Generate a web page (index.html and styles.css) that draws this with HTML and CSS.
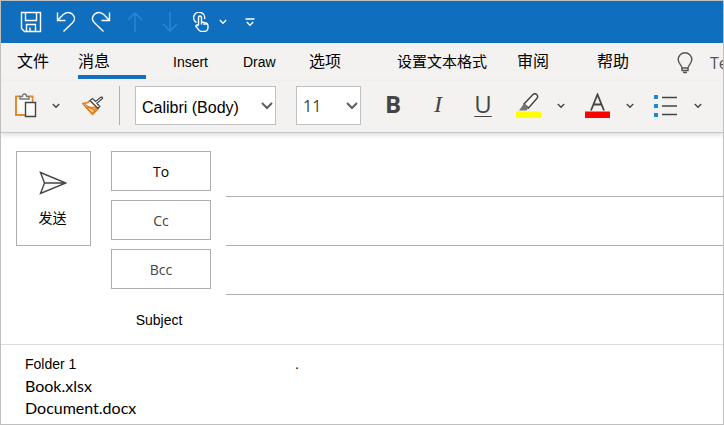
FILE: index.html
```
<!DOCTYPE html>
<html lang="zh-CN">
<head>
<meta charset="utf-8">
<meta name="viewport" content="width=device-width, initial-scale=1">
<title>消息</title>
<link rel="stylesheet" href="styles.css">
</head>
<body>
<div class="window">
  <header class="quick">
    <button class="icon-btn save" aria-label="Save"><svg width="22" height="22" viewBox="0 0 22 22"><path d="M1.5 1.5h19v19H4.5l-3-3zM5.5 1.5v8h11v-8M6.5 20.5v-7h9v7M10 20v-3.500"/></svg></button>
    <button class="icon-btn undo" aria-label="Undo"><svg width="20" height="22" viewBox="0 0 20 22"><path d="M1.500 1.500v8h8M2 9L7 3.800C10 .8 14 .8 16.500 3.200c2.600 2.600 2.600 6 0 8.600L7.500 20.500"/></svg></button>
    <button class="icon-btn redo" aria-label="Redo"><svg width="20" height="22" viewBox="0 0 20 22"><path d="M18.500 1.500v8h-8M18 9l-5-5.200C10 .8 6 .8 3.500 3.200c-2.600 2.600-2.600 6 0 8.600l9 8.700"/></svg></button>
    <button class="icon-btn dim up" aria-label="Previous" disabled><svg width="16" height="20" viewBox="0 0 16 20"><path d="M8 20V1M1 8l7-7 7 7"/></svg></button>
    <button class="icon-btn dim down" aria-label="Next" disabled><svg width="16" height="20" viewBox="0 0 16 20"><path d="M8 0v19M1 12l7 7 7-7"/></svg></button>
    <button class="icon-btn touch" aria-label="Touch mode"><svg width="16" height="20" viewBox="0 0 16 20"><path d="M3.500 10.500A5.500 5.500 0 1 1 11.500 7"/><path d="M5.500 13V5.500a1.500 1.500 0 0 1 3 0V10l4.500 1c1.500.4 2 1 2 2.500v2c0 2-1.500 4-3.500 4H8c-1.500 0-2.500-1.500-5-5-.8-1.300.8-2.200 2.500-.5M8.500 10v2.500M11 10.500v2.500M13 11v2"/></svg></button>
    <button class="icon-btn touch-menu" aria-label="Touch options"><svg width="8" height="6" viewBox="0 0 8 6"><path d="M.8 1L4 4.200 7.200 1"/></svg></button>
    <button class="icon-btn" aria-label="Customize toolbar"><svg width="10" height="9" viewBox="0 0 10 9"><path d="M.5 1h9M1.800 4L5 7.200 8.200 4"/></svg></button>
  </header>

  <nav class="tabs">
    <a href="#">文件</a>
    <a href="#" class="active">消息</a>
    <a href="#" class="latin">Insert</a>
    <a href="#" class="latin">Draw</a>
    <a href="#">选项</a>
    <a href="#" class="long">设置文本格式</a>
    <a href="#">审阅</a>
    <a href="#">帮助</a>
    <a href="#" class="tell"><svg width="16" height="22" viewBox="0 0 16 22"><path d="M5 16c0-3-3.800-4.200-3.800-8.500a6.800 6.800 0 0 1 13.600 0C14.800 11.800 11 13 11 16z"/><path d="M5 16v2.500h6V16M6 20.500h4" /></svg><span>Te</span></a>
  </nav>

  <div class="tools">
    <button class="icon-btn paste" aria-label="Paste"><svg width="23" height="25" viewBox="0 0 23 25"><path d="M6.500 3.500H2v18.500h9M14.500 3.500h4V9" fill="#fafafa" stroke="#e38b2c" stroke-width="2"/><path d="M3 4.500h14.500V10H11v11H3z" fill="#fafafa" stroke="none"/><path d="M6 6V3.500h2.500C8.500 1.600 9.500 1 10.500 1s2 .6 2 2.500H15V6z" fill="#fff" stroke="#777"/><path d="M11.500 9.500h10v14h-10z" fill="#fafafa" stroke="#444"/></svg></button>
    <button class="icon-btn drop" aria-label="Paste options"><svg width="8" height="6" viewBox="0 0 8 6"><path d="M.8 1L4 4.200 7.200 1"/></svg></button>
    <button class="icon-btn brush" aria-label="Format painter"><svg width="22" height="20" viewBox="0 0 22 20"><path d="M8 4.500C6 7 3.500 7.500.8 7.500L10.500 18.500l5.500-5.500z" fill="#fff" stroke="#e07b1d"/><path d="M4.500 11.500h10.800L10.500 18z" fill="#ffd27a" stroke="#e07b1d"/><path d="M3 8.500l10 6" stroke="#e07b1d"/><path d="M8 4.500l8 8 1.800-2-3-3.300 5.700-4.700q.3-1.700-1.400-1.500l-5.600 4.500-3-3z" fill="#fafafa" stroke="#444" stroke-width="1.200"/></svg></button>
    <span class="divider"></span>
    <label class="pick font"><select aria-label="Font"><option>Calibri (Body)</option></select><svg width="12" height="8" viewBox="0 0 12 8"><path d="M1 1l5 5 5-5"/></svg></label>
    <label class="pick size"><select aria-label="Font size"><option>11</option></select><svg width="12" height="8" viewBox="0 0 12 8"><path d="M1 1l5 5 5-5"/></svg></label>
    <button class="icon-btn letter bold">B</button>
    <button class="icon-btn letter italic">I</button>
    <button class="icon-btn letter underline">U</button>
    <button class="icon-btn color" aria-label="Highlight"><svg width="25" height="26" viewBox="0 0 25 26"><path d="M8 11L17 1.500c2.500-2 6 .8 4 3.700L12.500 15z" fill="#fafafa" stroke-width="1.500"/><path d="M8 10.500l4.500 4.500-2 2.500H3z" fill="#777" stroke="none"/><path d="M0 18.500h25v6.500H0z" fill="#ff0" stroke="none"/></svg></button>
    <button class="icon-btn drop" aria-label="Highlight options"><svg width="8" height="6" viewBox="0 0 8 6"><path d="M.8 1L4 4.200 7.200 1"/></svg></button>
    <button class="icon-btn color" aria-label="Font color"><svg width="25" height="26" viewBox="0 0 25 26"><path d="M6 17.500L12.500 1.500 19 17.500M8.500 11.500h8" stroke-width="1.800"/><path d="M0 18.500h25v6.500H0z" fill="#f00" stroke="none"/></svg></button>
    <button class="icon-btn drop" aria-label="Font color options"><svg width="8" height="6" viewBox="0 0 8 6"><path d="M.8 1L4 4.200 7.200 1"/></svg></button>
    <button class="icon-btn list" aria-label="Bullets"><svg width="24" height="22" viewBox="0 0 24 22"><path d="M0 0h4v4H0zM0 9h4v4H0zM0 18h4v4H0z" fill="#1e88d2" stroke="none"/><path d="M8 2.500h15M8 11h15M8 19.500h15"/></svg></button>
    <button class="icon-btn" aria-label="Bullet options"><svg width="8" height="6" viewBox="0 0 8 6"><path d="M.8 1L4 4.200 7.200 1"/></svg></button>
  </div>

  <form class="compose">
    <button type="button" class="box send"><svg width="28" height="24" viewBox="0 0 28 24"><path d="M1.500 1.500L27 12 1.500 22.500l4-10.500zM5.500 12H27" fill="#fafafa"/></svg><span>发送</span></button>
    <div class="fields">
      <div class="row"><button type="button" class="box to">To</button><input aria-label="To"></div>
      <div class="row"><button type="button" class="box">Cc</button><input aria-label="Cc"></div>
      <div class="row"><button type="button" class="box">Bcc</button><input aria-label="Bcc"></div>
      <div class="row subject"><label for="subject">Subject</label><input id="subject"></div>
    </div>
  </form>

  <main class="body">
    <p class="folder"><span>Folder 1</span><span>.</span></p>
    <p>Book.xlsx</p>
    <p>Document.docx</p>
  </main>
</div>
</body>
</html>
```
FILE: styles.css
```
* { box-sizing: border-box; }

body {
  margin: 0;
  font-family: "Liberation Sans", "Noto Sans CJK SC", sans-serif;
  font-size: 14px;
  color: #000;
  background: #fff;
}

button, input, select { font: inherit; color: inherit; margin: 0; }

svg {
  display: block;
  flex: none;
  fill: none;
  stroke: currentColor;
  stroke-width: 1.4;
}

.window {
  display: flex;
  flex-direction: column;
  min-height: 100vh;
  border: 1px solid #bfbfbf;
  overflow: hidden;
}

.icon-btn {
  flex: none;
  padding: 0;
  border: 0;
  background: none;
}

/* Quick access bar */
.quick {
  display: flex;
  align-items: center;
  height: 42px;
  padding-left: 19px;
  background: #106ebe;
  color: #fff;
}
.save { margin-right: 14px; }
.undo { margin-right: 15px; }
.redo { margin-right: 16px; }
.up { margin-right: 19px; }
.down { margin-right: 15px; }
.touch { margin-right: 10px; }
.touch-menu { margin-right: 18px; }
.quick .dim { color: #2b88d8; }

/* Ribbon tabs */
.tabs {
  display: grid;
  grid-template-columns: 61px 95px 70px 66px 88px 120px 80px 80px 1fr;
  height: 38px;
  padding-left: 16px;
  background: #f3f2f1;
  overflow: hidden;
}
.tabs a {
  justify-self: start;
  height: 36px;
  line-height: 38px;
  font-size: 16px;
  color: #000;
  text-decoration: none;
  white-space: nowrap;
}
.tabs .active { width: 68px; border-bottom: 4px solid #106ebe; }
.tabs .latin { font-size: 14px; }
.tabs .long { font-size: 15px; }
.tabs .tell {
  display: flex;
  align-items: center;
  gap: 17px;
  height: 40px;
  font-family: "Open Sans", sans-serif;
  color: #555;
}

/* Formatting tools */
.tools {
  display: flex;
  align-items: center;
  height: 52px;
  padding: 0 0 2px 13px;
  background: #f3f2f1;
  border-bottom: 1px solid #c8c6c4;
  box-shadow: 0 2px 5px #dcdcdc;
  color: #444;
}
.paste { margin-right: 15px; }
.drop { margin-right: 20px; }
.brush { margin-right: 15px; }
.divider { width: 1px; height: 39px; margin-right: 15px; background: #b3b0ad; }
.paste + .drop { margin-right: 22px; }
.pick { display: grid; align-items: center; flex: none; }
.pick select, .pick svg { grid-area: 1 / 1; }
.pick svg { justify-self: end; margin-right: 3px; stroke: #605e5c; stroke-width: 2; pointer-events: none; }
.pick select {
  width: 100%;
  height: 39px;
  padding: 0 6px;
  border: 1px solid #c0c0c0;
  border-radius: 0;
  background: #fff;
  appearance: none;
  font-size: 16px;
}
.font { width: 141px; margin-right: 20px; }
.font select { padding-top: 4px; color: #000; }
.size { width: 65px; margin-right: 21px; }
.size select { font-family: "Open Sans", sans-serif; color: #444; }
.letter {
  width: 22px;
  margin-right: 23px;
  padding-bottom: 4px;
  font-family: "Open Sans", sans-serif;
  font-size: 24px;
  line-height: 30px;
}
.bold { font-weight: 700; }
.italic { font-family: "Liberation Serif", serif; font-style: italic; }
.underline { margin-right: 22px; text-decoration: underline; text-decoration-thickness: 1px; text-underline-offset: 3px; }
.color { margin-right: 16px; }
.list { margin-right: 16px; }

/* Message header */
.compose {
  display: flex;
  align-items: flex-start;
  gap: 20px;
  padding: 15px 0 0 15px;
  border-bottom: 1px solid #dcdcdc;
}
.box {
  flex: none;
  width: 100px;
  height: 40px;
  padding: 0;
  border: 1px solid #adadad;
  background: #fff;
  font-family: "Open Sans", sans-serif;
  font-size: 14px;
  color: #444;
}
.to { color: #000; }
.send {
  display: flex;
  flex-direction: column;
  align-items: center;
  justify-content: center;
  gap: 12px;
  width: 75px;
  height: 95px;
  margin-top: 3px;
  padding-right: 2px;
  font-family: "Noto Sans CJK SC", sans-serif;
}
.send span { line-height: 20px; color: #000; }
.send svg { color: #444; }
.fields { flex: 1; min-width: 0; }
.row { display: flex; gap: 15px; height: 49px; }
.row .box { margin-top: 3px; }
.row input {
  flex: 1;
  min-width: 0;
  border: 0;
  border-bottom: 1px solid #adadad;
  background: none;
  outline: none;
}
.subject label { width: 100px; padding-right: 4px; text-align: center; line-height: 51px; }
.subject input { border: 0; }

/* Message body */
.body { padding: 8px 24px 0; }
.body p {
  margin: 0;
  font-family: Lato, sans-serif;
  font-size: 16px;
  line-height: 22px;
}
.body .folder {
  display: grid;
  grid-template-columns: 270px 1fr;
  font-family: "Liberation Sans", sans-serif;
  font-size: 14px;
}
```
